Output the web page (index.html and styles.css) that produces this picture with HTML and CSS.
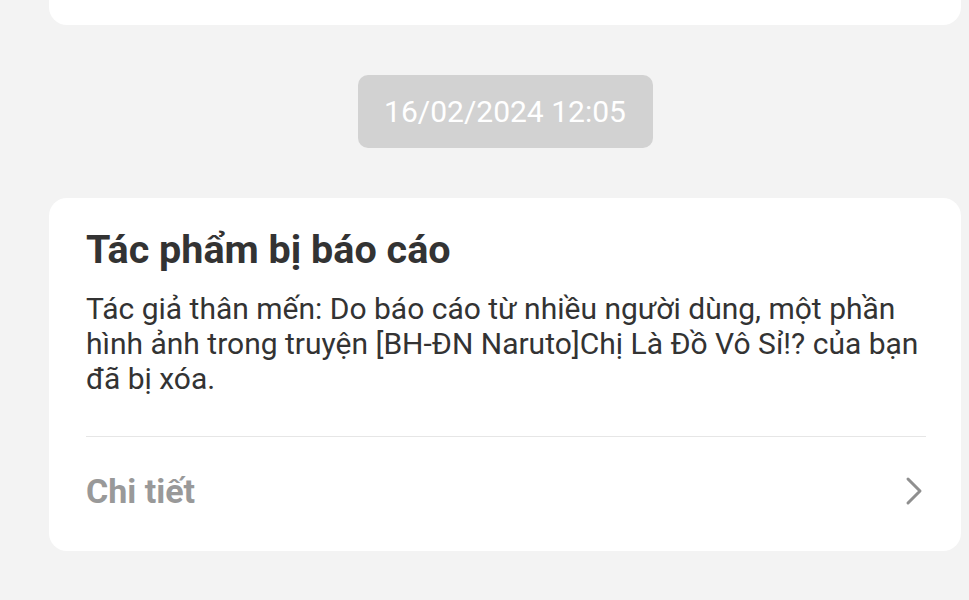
FILE: index.html
```html
<html>
    <head>
        <link rel="stylesheet" href="styles.css">
    </head>
    <body>
        <div class="feed">
            <div class="card card--prev"></div>
            <div class="stamp"><span class="stamp__text">16/02/2024 12:05</span></div>
            <div class="card">
                <h1 class="card__title">Tác phẩm bị báo cáo</h1>
                <p class="card__body">Tác giả thân mến: Do báo cáo từ nhiều người dùng, một phần hình ảnh trong truyện [BH-ĐN Naruto]Chị Là Đồ Vô Sỉ!? của bạn đã bị xóa.</p>
                <a class="card__more" href="#">
                    <span>Chi tiết</span>
                    <svg class="card__chevron" width="20" height="30" viewBox="0 0 20 30">
                        <path d="M4 3 L16 15 L4 27" fill="none" stroke="#8f8f8f" stroke-width="3" stroke-linecap="round" stroke-linejoin="round"/>
                    </svg>
                </a>
            </div>
        </div>
    </body>
</html>
```

FILE: styles.css
```css
* {
  padding: 0;
  margin: 0;
  box-sizing: border-box;
}

html {
  font-family: Roboto, "Liberation Sans", sans-serif;
  background: #f3f3f3;
}

body {
  min-height: 100vh;
}

.feed {
  display: flex;
  flex-direction: column;
  padding: 0 8px 0 49px;
}

.card {
  background: white;
  border-radius: 18px;
  padding: 28px 35px 0 37px;
  color: #333;
}

.card--prev {
  height: 25px;
  border-radius: 0 0 18px 18px;
  padding: 0;
}

.stamp {
  display: flex;
  justify-content: center;
  padding: 50px 0;
}

.stamp__text {
  background: #d2d2d2;
  color: white;
  border-radius: 10px;
  font-size: 30px;
  line-height: 73px;
  width: 295px;
  text-align: center;
}

.card__title {
  font-size: 39.5px;
  font-weight: 700;
  line-height: 48px;
}

.card__body {
  font-size: 30px;
  line-height: 35px;
  margin-top: 17px;
  padding-bottom: 40px;
  border-bottom: 1px solid #e6e6e6;
}

.card__more {
  display: flex;
  justify-content: space-between;
  align-items: center;
  height: 114px;
  padding-bottom: 6px;
  color: #999;
  font-size: 34px;
  font-weight: 700;
  text-decoration: none;
}

.card__chevron {
  margin-right: 2px;
}
```
